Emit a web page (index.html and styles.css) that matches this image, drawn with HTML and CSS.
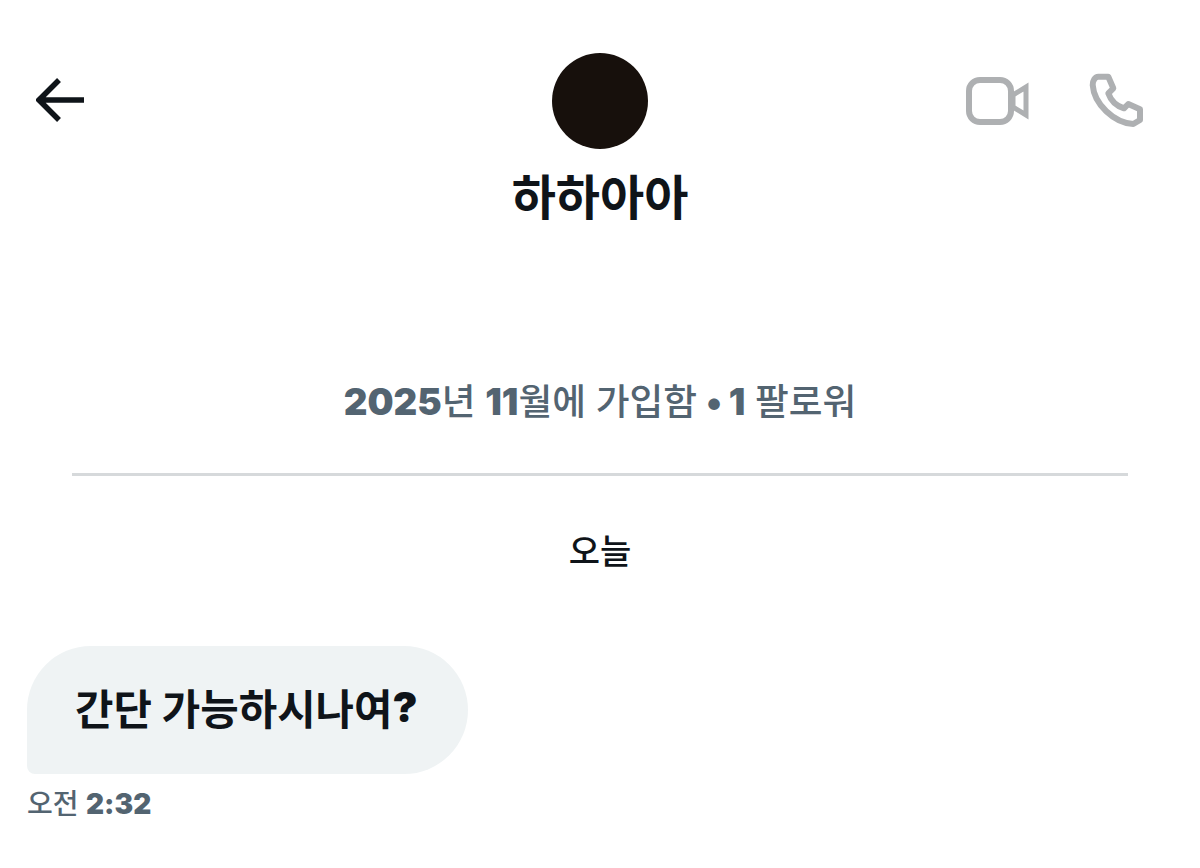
FILE: index.html

```html
<!DOCTYPE html>
<html lang="ko">
<head>
  <meta charset="UTF-8" />
  <meta name="viewport" content="width=device-width, initial-scale=1.0"/>
  <title>하하아아</title>
  <link rel="stylesheet" href="styles.css">
</head>
<body>
  <div class="container">
    <div class="top-bar">
      <div class="top-left">
        <svg class="icon-back" width="48" height="44" viewBox="0 0 48 44" fill="none">
          <path d="M48 22H4M23 2L3 22L23 42" stroke="#0f1419" stroke-width="5.5"/>
        </svg>
      </div>
      <div class="profile">
        <div class="avatar"></div>
        <div class="name">하하아아</div>
      </div>
      <div class="top-right">
        <svg class="icon-video" width="64" height="48" viewBox="0 0 64 48" fill="none">
          <rect x="3" y="3" width="42" height="42" rx="11" stroke="#aeb0b2" stroke-width="6"/>
          <path d="M47 18L60 10V38L47 30Z" stroke="#aeb0b2" stroke-width="5"/>
        </svg>
        <svg width="60" height="60" viewBox="0 0 60 60" fill="none">
          <path d="M6.7 15C6.5 11 9 6.7 12.3 6.7H22.3L27.3 18.3L22.3 23.3C25 31 30 36 38 38.3L42.3 34L54 39.3V50L47.3 54C28 53 8 34 6.7 15Z" stroke="#aeb0b2" stroke-width="6" stroke-linejoin="round"/>
        </svg>
      </div>
    </div>

    <div class="joined"><b>2025</b>년 <b>11</b>월에 가입함 <b>• 1</b> 팔로워</div>
    <div class="divider"></div>
    <div class="day">오늘</div>

    <div class="bubble">간단 가능하시나여<b>?</b></div>
    <div class="time">오전 <b>2:32</b></div>
  </div>
</body>
</html>
```

FILE: styles.css

```css
body {
  margin: 0;
  background-color: #ffffff;
  color: #0f1419;
  font-family: "Inter", "Noto Sans CJK KR", sans-serif;
}

.container {
  padding: 53px 27px 0;
}

.top-bar {
  display: grid;
  grid-template-columns: 1fr auto 1fr;
}

.top-left {
  padding: 25px 0 0 9px;
}

.icon-back {
  display: block;
}

.top-right {
  display: flex;
  justify-content: flex-end;
  align-items: flex-start;
  gap: 56px;
  padding: 17px 27px 0 0;
}

.icon-video {
  margin-top: 7px;
}

.profile {
  display: flex;
  flex-direction: column;
  align-items: center;
}

.avatar {
  width: 96px;
  height: 96px;
  border-radius: 50%;
  background-color: #17100c;
}

.name {
  margin-top: 17px;
  font-size: 48px;
  font-weight: 700;
  line-height: 64px;
}

.joined {
  margin-top: 147px;
  text-align: center;
  font-size: 36.7px;
  font-weight: 500;
  line-height: 50px;
  color: #536471;
}

.joined b,
.time b,
.bubble b {
  font-weight: 900;
}

.divider {
  height: 3px;
  margin: 46px 45px 0;
  background-color: #d6d9db;
}

.day {
  margin-top: 54px;
  text-align: center;
  font-size: 34px;
  font-weight: 500;
  line-height: 44px;
  color: #0f1419;
}

.bubble {
  box-sizing: border-box;
  width: 441px;
  height: 128px;
  margin-top: 72px;
  padding: 0 0 6px 48px;
  display: flex;
  align-items: center;
  background-color: #eff3f4;
  border-radius: 64px 64px 64px 8px;
  font-size: 41.8px;
  font-weight: 700;
  white-space: pre;
}

.time {
  margin-top: 11px;
  font-size: 28px;
  font-weight: 500;
  line-height: 38px;
  color: #536471;
}
```
